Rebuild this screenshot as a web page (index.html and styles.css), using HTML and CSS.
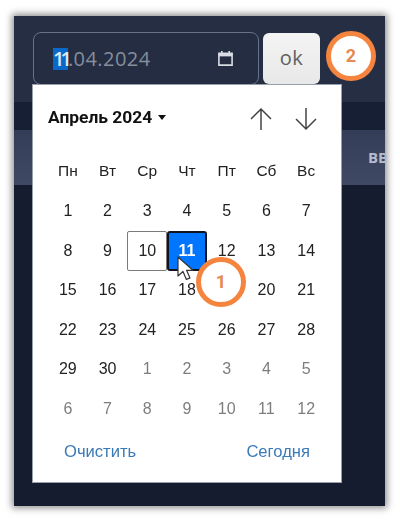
FILE: index.html
```html
<!DOCTYPE html>
<html lang="ru">
<head>
<meta charset="utf-8">
<title>Календарь</title>
<link rel="stylesheet" href="styles.css">
</head>
<body>
<div class="screen">
  <div class="topbar">
    <div class="date-input">
      <span class="date-text"><span class="sel">11</span>.04.2024</span>
      <svg class="cal-icon" viewBox="0 0 16 16" width="17" height="17"><path fill="none" stroke="#d9dce2" stroke-width="1.5" d="M1.8 3.2h12.4v11H1.8z"/><path fill="#d9dce2" d="M1.5 3h13v3h-13z"/><path stroke="#d9dce2" stroke-width="1.5" d="M4.5 1v2.5M11.5 1v2.5"/></svg>
    </div>
    <div class="ok">ok</div>
  </div>
  <div class="band"></div>
  <div class="tablehead"><span class="th-text">ВВ</span></div>
  <div class="rest"></div>

  <div class="popup">
    <div class="pop-head">
      <span class="month">Апрель 2024</span>
      <span class="caret"></span>
      <span class="arrows">
        <svg viewBox="0 0 24 24" width="24" height="24"><path fill="none" stroke="#444" stroke-width="1.5" d="M12 23V2M2 12 12 2l10 10"/></svg>
        <svg viewBox="0 0 24 24" width="24" height="24"><path fill="none" stroke="#444" stroke-width="1.5" d="M12 1v21M2 12l10 10 10-10"/></svg>
      </span>
    </div>
    <div class="grid">
      <div class="wd">Пн</div><div class="wd">Вт</div><div class="wd">Ср</div><div class="wd">Чт</div><div class="wd">Пт</div><div class="wd">Сб</div><div class="wd">Вс</div>
      <div class="d">1</div><div class="d">2</div><div class="d">3</div><div class="d">4</div><div class="d">5</div><div class="d">6</div><div class="d">7</div>
      <div class="d">8</div><div class="d">9</div><div class="d today">10</div><div class="d active">11</div><div class="d">12</div><div class="d">13</div><div class="d">14</div>
      <div class="d">15</div><div class="d">16</div><div class="d">17</div><div class="d">18</div><div class="d">19</div><div class="d">20</div><div class="d">21</div>
      <div class="d">22</div><div class="d">23</div><div class="d">24</div><div class="d">25</div><div class="d">26</div><div class="d">27</div><div class="d">28</div>
      <div class="d">29</div><div class="d">30</div><div class="d out">1</div><div class="d out">2</div><div class="d out">3</div><div class="d out">4</div><div class="d out">5</div>
      <div class="d out">6</div><div class="d out">7</div><div class="d out">8</div><div class="d out">9</div><div class="d out">10</div><div class="d out">11</div><div class="d out">12</div>
    </div>
    <div class="pop-foot"><span>Очистить</span><span>Сегодня</span></div>
  </div>

  <svg class="cursor" viewBox="0 0 18 26" width="18" height="26"><path d="M1 1v19l5-4.5 3.4 8 3.6-1.6-3.4-7.6H16z" fill="#fff" stroke="#333" stroke-width="1.2" stroke-linejoin="round"/></svg>
  <div class="badge badge-one">1</div>
  <div class="badge badge-two">2</div>
</div>
</body>
</html>
```

FILE: styles.css
```css
html, body { margin: 0; padding: 0; background: #fff; }
body { width: 400px; height: 522px; overflow: hidden; font-family: "Liberation Sans", Arial, sans-serif; }

.screen {
  position: relative;
  margin: 16px 0 0 14px;
  width: 371px;
  height: 490px;
  display: flex;
  flex-direction: column;
  background: #151c30;
  box-shadow: 0 0 7px 2px rgba(0,0,0,.45);
  filter: blur(.35px);
}
.topbar {
  height: 86px;
  flex: none;
  box-sizing: border-box;
  padding: 16px 0 0 19px;
  display: flex;
  align-items: flex-start;
  gap: 4px;
  background: #262e44;
}
.date-input {
  width: 226px;
  height: 53px;
  box-sizing: border-box;
  border: 1px solid #68718a;
  border-radius: 8px;
  background: #252d43;
  display: flex;
  align-items: center;
  justify-content: space-between;
  padding: 0 24px 0 19px;
}
.date-text { font: 20px/24px "Open Sans", sans-serif; color: #868d9d; letter-spacing: .45px; }
.sel { display: inline-block; height: 22px; line-height: 22px; background: #0a69c8; color: #dbe9f7; letter-spacing: -4px; font-weight: 600; }
.cal-icon { display: block; }
.ok {
  width: 57px;
  height: 51px;
  margin-top: 1px;
  border-radius: 6px;
  background: linear-gradient(#f4f4f4, #e8e8e8);
  color: #606060;
  font: 20px/49px "Open Sans", sans-serif;
  letter-spacing: .5px;
  text-align: center;
}
.band { height: 28px; flex: none; background: #171f35; }
.tablehead {
  height: 55px;
  flex: none;
  background: linear-gradient(#343d57, #3f4963);
  display: flex;
  justify-content: flex-end;
  overflow: hidden;
  position: relative;
}
.th-text {
  position: absolute;
  left: 354px;
  top: 18px;
  font: bold 15px/18px "Open Sans", sans-serif;
  color: #b6bcc9;
  white-space: nowrap;
}
.rest { flex: 1; background: #151c30; }

.popup {
  position: absolute;
  left: 19px;
  top: 69px;
  width: 308px;
  height: 397px;
  box-sizing: border-box;
  background: #fff;
  box-shadow: 0 0 0 1px #9aa0ab;
  padding: 0 15px;
  display: flex;
  flex-direction: column;
  color: #222;
}
.pop-head {
  height: 66px;
  flex: none;
  display: flex;
  align-items: center;
  color: #111;
}
.month { font: bold 17.4px/20px Roboto, sans-serif; margin-top: -3px; }
.caret {
  width: 0; height: 0;
  margin-left: 6px;
  margin-top: -2px;
  border: 4.5px solid transparent;
  border-top: 5px solid #111;
  border-bottom: 0;
}
.arrows {
  margin-left: auto;
  display: flex;
  gap: 21px;
  padding-right: 8px;
  margin-top: 2px;
}
.arrows svg { display: block; }
.grid {
  display: grid;
  grid-template-columns: repeat(7, 1fr);
  grid-template-rows: 40.5px;
  grid-auto-rows: 39.5px;
}
.wd, .d {
  display: flex;
  align-items: center;
  justify-content: center;
  font-size: 16px;
  box-sizing: border-box;
}
.wd { font-size: 15.5px; }
.out { color: #7d7d7d; }
.today { border: 1px solid #7a7a7a; border-radius: 2px; }
.active {
  background: #0075ff;
  border: 2px solid #0f1420;
  border-radius: 3px;
  color: #fff;
  font-weight: bold;
}
.pop-foot {
  display: flex;
  justify-content: space-between;
  padding: 0 16px;
  margin-top: 13.5px;
  font-size: 16.6px;
  line-height: 20px;
  color: #3a7ab8;
}
.cursor { position: absolute; left: 163px; top: 240px; }
.badge {
  position: absolute;
  box-sizing: border-box;
  width: 50px;
  height: 50px;
  border: 5px solid #f5843f;
  border-radius: 50%;
  background: #fff;
  color: #e58a50;
  font: bold 18px/40px Roboto, sans-serif;
  text-align: center;
}
.badge-one { left: 182px; top: 241px; }
.badge-two { left: 312px; top: 15px; }
```
